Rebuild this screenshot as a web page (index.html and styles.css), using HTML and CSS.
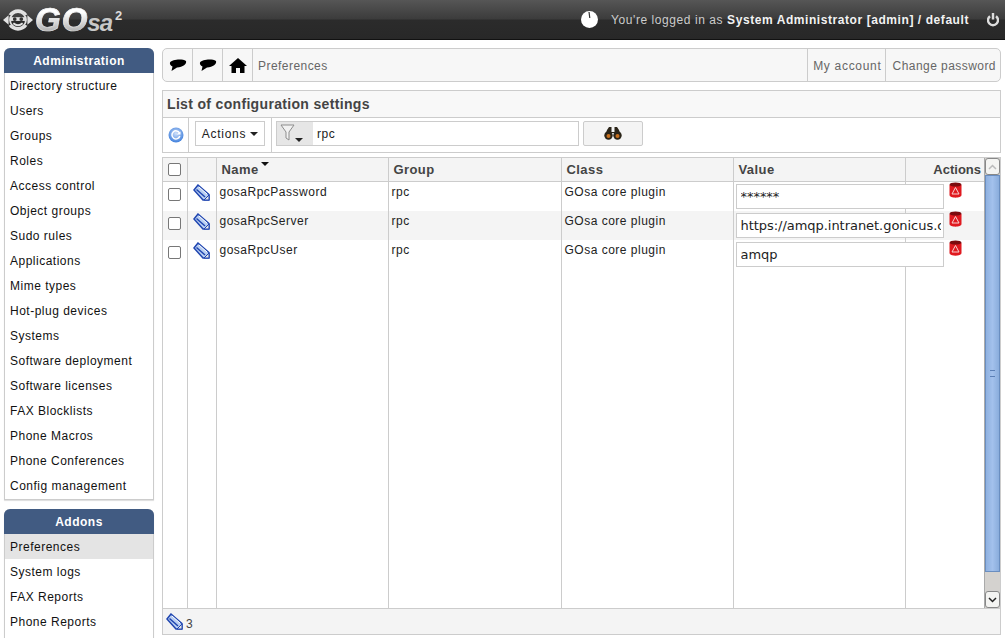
FILE: index.html
```html
<!doctype html>
<html lang="en">
<head>
	<meta charset="UTF-8">
	<title>GOsa2 - Preferences</title>
	<link rel="stylesheet" href="styles.css">
</head>
<body>
	<div class="header">
		<div class="logo">
			<svg class="logo-mark" width="30" height="30" viewBox="0 0 32 32">
				<path d="M6 10a12 12 0 0 1 20 0l-2.500 1a9.500 9.500 0 0 0-15 0z" fill="#e2e2e2"/>
				<path d="M6 22a12 12 0 0 0 20 0l-2.500-1a9.500 9.500 0 0 1-15 0z" fill="#e2e2e2"/>
				<circle cx="16" cy="16" r="8.500" fill="none" stroke="#e2e2e2" stroke-width="2"/>
				<path d="M7.500 13h17v4h-17z" fill="#e2e2e2"/>
				<circle cx="12.500" cy="15" r="2" fill="#333"/>
				<circle cx="19.500" cy="15" r="2" fill="#333"/>
				<path d="M11 19.500c3 2.500 7 2.500 10 0" fill="none" stroke="#e2e2e2" stroke-width="2"/>
				<path d="M0 16l6-5v10zM32 16l-6-5v10z" fill="#e2e2e2"/>
			</svg>
			<span class="logo-go">GO</span><span class="logo-sa">sa</span><sup class="logo-two">2</sup>
		</div>
		<div class="header-right">
			<svg class="clock" width="17" height="17" viewBox="0 0 17 17">
				<circle cx="8.500" cy="8.500" r="8.500" fill="#fff"/>
				<path d="M8 1l.8 6" stroke="#333" stroke-width="1.200"/>
			</svg>
			<span class="login">You're logged in as <b>System Administrator [admin] / default</b></span>
			<svg class="power" width="12" height="14" viewBox="0 0 12 14">
				<path d="M3 3.200a5 5 0 1 0 6 0" fill="none" stroke="#ddd" stroke-width="2.400"/>
				<path d="M6 0v6.500" stroke="#ddd" stroke-width="2.400"/>
			</svg>
		</div>
	</div>

	<div class="wrap">
		<div class="side">
			<div class="menu">
				<h2>Administration</h2>
				<ul>
					<li>Directory structure</li>
					<li>Users</li>
					<li>Groups</li>
					<li>Roles</li>
					<li>Access control</li>
					<li>Object groups</li>
					<li>Sudo rules</li>
					<li>Applications</li>
					<li>Mime types</li>
					<li>Hot-plug devices</li>
					<li>Systems</li>
					<li>Software deployment</li>
					<li>Software licenses</li>
					<li>FAX Blocklists</li>
					<li>Phone Macros</li>
					<li>Phone Conferences</li>
					<li>Config management</li>
				</ul>
			</div>
			<div class="menu">
				<h2>Addons</h2>
				<ul>
					<li class="on">Preferences</li>
					<li>System logs</li>
					<li>FAX Reports</li>
					<li>Phone Reports</li>
					<li>&nbsp;</li>
				</ul>
			</div>
		</div>

		<div class="main">
			<div class="crumbs">
				<div class="crumb-icon">
					<svg width="18" height="14" viewBox="0 0 18 14"><path d="M1 4.500C3 1.500 13 .500 17 3c1 3-3 6-9 6.500L2.500 13l1-4.500C1.500 7.500.5 6 1 4.500z" fill="#000"/></svg>
				</div>
				<div class="crumb-icon">
					<svg width="18" height="14" viewBox="0 0 18 14"><path d="M1 4.500C3 1.500 13 .500 17 3c1 3-3 6-9 6.500L2.500 13l1-4.500C1.500 7.500.5 6 1 4.500z" fill="#000"/></svg>
				</div>
				<div class="crumb-icon">
					<svg width="18" height="15" viewBox="0 0 18 15"><path d="M9 0l9 8h-2.500v7H11v-5H7v5H2.500V8H0z" fill="#000"/></svg>
				</div>
				<div class="crumb-text">Preferences</div>
				<div class="crumb-link account">My account</div>
				<div class="crumb-link password">Change password</div>
			</div>

			<div class="panel">
				<div class="panel-title">List of configuration settings</div>
				<div class="filter">
					<div class="filter-reload">
						<svg width="16" height="16" viewBox="0 0 16 16">
							<defs>
								<radialGradient id="reload-ball" cx="50%" cy="40%" r="60%">
									<stop offset="0" stop-color="#cfe0fa"/>
									<stop offset="1" stop-color="#3f7fdc"/>
								</radialGradient>
							</defs>
							<circle cx="8" cy="8" r="7.500" fill="url(#reload-ball)"/>
							<path d="M11.500 6a4 4 0 1 0 .300 3" fill="none" stroke="#fff" stroke-width="1.500"/>
							<path d="M8.500 7.500h4v-3z" fill="#fff"/>
						</svg>
					</div>
					<div class="filter-actions">
						<button class="btn-actions">Actions <i class="caret"></i></button>
					</div>
					<div class="filter-search">
						<div class="search-box">
							<div class="funnel">
								<svg width="15" height="18" viewBox="0 0 15 18">
									<path d="M1 1h13L9 8v8l-3-2V8z" fill="#f2f2f2" stroke="#8d8d8d"/>
								</svg>
								<i class="caret"></i>
							</div>
							<input class="search-input" type="text" value="rpc">
						</div>
						<button class="btn-search">
							<svg width="18" height="13" viewBox="0 0 18 13">
								<circle cx="4.500" cy="8.500" r="4.200" fill="#2a2418"/>
								<circle cx="13.500" cy="8.500" r="4.200" fill="#2a2418"/>
								<path d="M3 3l2-3h2.500v5h3V0H13l2 3 1 3H2z" fill="#2a2418"/>
								<circle cx="4.500" cy="9" r="2" fill="#c8701e"/>
								<circle cx="13.500" cy="9" r="2" fill="#c8701e"/>
							</svg>
						</button>
					</div>
				</div>
			</div>

			<div class="list">
				<div class="list-body">
					<table class="grid">
						<colgroup>
							<col class="c-check"><col class="c-icon"><col class="c-name"><col class="c-group"><col class="c-class"><col class="c-value"><col>
						</colgroup>
						<thead>
							<tr>
								<th class="center"><input class="check" type="checkbox"></th>
								<th></th>
								<th class="sorted">Name <i class="sort-mark"></i></th>
								<th>Group</th>
								<th>Class</th>
								<th>Value</th>
								<th class="right">Actions</th>
							</tr>
						</thead>
						<tbody>
							<tr class="first">
								<td class="center"><input class="check" type="checkbox"></td>
								<td class="center"><svg class="tag" width="17" height="17" viewBox="0 0 17 17"><use href="#tag-icon"/></svg></td>
								<td>gosaRpcPassword</td>
								<td>rpc</td>
								<td>GOsa core plugin</td>
								<td class="val"><input class="value" type="text" value="******"></td>
								<td class="act"><svg width="13" height="16" viewBox="0 0 13 16"><use href="#bin-icon"/></svg></td>
							</tr>
							<tr class="alt">
								<td class="center"><input class="check" type="checkbox"></td>
								<td class="center"><svg class="tag" width="17" height="17" viewBox="0 0 17 17"><use href="#tag-icon"/></svg></td>
								<td>gosaRpcServer</td>
								<td>rpc</td>
								<td>GOsa core plugin</td>
								<td class="val"><input class="value" type="text" value="https://amqp.intranet.gonicus.com/rpc"></td>
								<td class="act"><svg width="13" height="16" viewBox="0 0 13 16"><use href="#bin-icon"/></svg></td>
							</tr>
							<tr>
								<td class="center"><input class="check" type="checkbox"></td>
								<td class="center"><svg class="tag" width="17" height="17" viewBox="0 0 17 17"><use href="#tag-icon"/></svg></td>
								<td>gosaRpcUser</td>
								<td>rpc</td>
								<td>GOsa core plugin</td>
								<td class="val"><input class="value" type="text" value="amqp"></td>
								<td class="act"><svg width="13" height="16" viewBox="0 0 13 16"><use href="#bin-icon"/></svg></td>
							</tr>
							<tr class="filler">
								<td></td><td></td><td></td><td></td><td></td><td></td><td></td>
							</tr>
						</tbody>
					</table>
					<div class="scroll">
						<div class="scroll-btn"><svg width="9" height="6" viewBox="0 0 9 6"><path d="M1 5l3.500-3.500L8 5" fill="none" stroke="#bbb" stroke-width="1.500"/></svg></div>
						<div class="scroll-thumb"><span class="grip"></span></div>
						<div class="scroll-btn"><svg width="9" height="6" viewBox="0 0 9 6"><path d="M1 1l3.500 3.500L8 1" fill="none" stroke="#222" stroke-width="1.500"/></svg></div>
					</div>
				</div>
				<div class="list-foot">
					<svg class="tag" width="17" height="17" viewBox="0 0 17 17"><use href="#tag-icon"/></svg>
					<span class="count">3</span>
				</div>
			</div>
		</div>
	</div>

	<svg class="defs" width="0" height="0">
		<symbol id="tag-icon" viewBox="0 0 17 17">
			<path d="M5 1L16 10.500v5.500h-6L1 6z" fill="#b9cff2" stroke="#1f45b0" stroke-width="1.500"/>
			<path d="M3.500 5.500l8.500 7.500" stroke="#1f45b0" stroke-width="1.500"/>
			<path d="M6 3l8 7" stroke="#fff"/>
			<path d="M11 16l5-5v5z" fill="#e6e6e6" stroke="#1f45b0"/>
		</symbol>
		<symbol id="bin-icon" viewBox="0 0 13 16">
			<path d="M.5 3v10c0 3.500 12 3.500 12 0V3z" fill="#e0191f"/>
			<ellipse cx="6.500" cy="2.500" rx="6" ry="2" fill="#7c0b0e"/>
			<path d="M6.500 5.500l3.500 6.500H3z" fill="none" stroke="#f8d0d0"/>
		</symbol>
	</svg>
</body>
</html>
```

FILE: styles.css
```css
*{margin:0;padding:0;box-sizing:border-box;}
html,body{height:638px;overflow:hidden;}
body{
	background:#fff;
	font-family:"Liberation Sans",Arial,sans-serif;
	font-size:12px;
	letter-spacing:.5px;
	color:#222;
}
.defs{position:absolute;}

/* header */
.header{
	height:40px;
	background:linear-gradient(#565656,#3c3c3c 48%,#2b2b2b 52%,#282828);
	border-bottom:1px solid #111;
	display:flex;
	justify-content:space-between;
	align-items:center;
	padding:0 6px 0 3px;
}
.logo{display:flex;align-items:center;color:#ddd;}
.logo-mark{margin-right:2px;}
.logo-go{
	font-size:33px;
	font-weight:bold;
	font-style:italic;
	letter-spacing:1px;
	background:linear-gradient(#fff 30%,#a8a8a8 85%);
	-webkit-background-clip:text;
	background-clip:text;
	color:transparent;
	-webkit-text-stroke:.7px rgba(255,255,255,.55);
}
.logo-sa{font-size:24px;font-weight:bold;font-style:italic;margin:7px 0 0 -1px;letter-spacing:-1px;color:#c8c8c8;}
.logo-two{font-size:13px;font-weight:bold;margin:-9px 0 0 3px;letter-spacing:0;color:#ddd;}
.header-right{display:flex;align-items:center;color:#ccc;}
.clock{margin-right:13px;}
.login{letter-spacing:.57px;}
.login b{color:#f2f2f2;}
.power{margin-left:18px;}

/* layout */
.wrap{display:flex;padding:8px 5px 0 4px;gap:8px;}
.side{width:150px;flex:none;display:flex;flex-direction:column;gap:9px;}
.main{flex:1;display:flex;flex-direction:column;}

/* menu */
.menu{border:1px solid #ccc;border-top:0;border-radius:6px 6px 0 0;box-shadow:0 1px 1px #ddd;}
.menu h2{
	background:#415b82;
	color:#fff;
	font-size:12px;
	height:25px;
	line-height:26px;
	text-align:center;
	margin:0 -1px;
	border-radius:6px 6px 0 0;
}
.menu ul{list-style:none;padding-bottom:1px;}
.menu li{height:25px;line-height:26px;padding-left:5px;color:#111;}
.menu li.on{background:#e4e4e4;}

/* crumbs */
.crumbs{
	height:34px;
	display:flex;
	background:#f7f7f7;
	border:1px solid #ccc;
	border-radius:5px;
	color:#666;
	line-height:34px;
	letter-spacing:.45px;
}
.crumb-icon{width:30px;display:flex;align-items:center;justify-content:center;border-right:1px solid #ccc;}
.crumb-text{flex:1;padding-left:5px;}
.crumb-link{border-left:1px solid #ccc;}
.account{padding:0 3px 0 5px;letter-spacing:.7px;}
.password{padding:0 4px 0 7px;}

/* panel */
.panel{margin-top:8px;border:1px solid #ccc;height:63px;}
.panel-title{
	height:27px;
	line-height:27px;
	padding-left:4px;
	font-size:14px;
	font-weight:bold;
	letter-spacing:.33px;
	color:#444;
	background:#f8f8f8;
	border-bottom:1px solid #ccc;
}
.filter{display:flex;height:34px;}
.filter-reload{width:26px;display:flex;align-items:center;justify-content:center;border-right:1px solid #ccc;}
.filter-actions{width:83px;padding:3px 0 0 6px;border-right:1px solid #ccc;}
.btn-actions{
	width:70px;
	height:25px;
	background:#fff;
	border:1px solid #ccc;
	font:12px "Liberation Sans",Arial,sans-serif;
	letter-spacing:.75px;
	color:#222;
}
.caret{
	display:inline-block;
	border:4px solid transparent;
	border-top-color:#222;
	border-bottom:0;
	vertical-align:middle;
}
.filter-search{display:flex;padding:3px 0 0 4px;}
.search-box{display:flex;width:303px;height:25px;border:1px solid #ccc;}
.funnel{width:36px;background:#e6e6e6;display:flex;align-items:flex-start;padding:2px 0 0 3px;}
.funnel .caret{margin-top:14px;}
.search-input{
	flex:1;
	min-width:0;
	border:0;
	padding-left:4px;
	font:12px "Liberation Sans",Arial,sans-serif;
	letter-spacing:.5px;
	color:#222;
}
.btn-search{
	width:60px;
	height:25px;
	margin-left:4px;
	background:#f4f4f4;
	border:1px solid #ccc;
	border-radius:2px;
	display:flex;
	align-items:center;
	justify-content:center;
}

/* list */
.list{
	margin-top:4px;
	height:478px;
	border:1px solid #ccc;
	display:flex;
	flex-direction:column;
}
.list-body{height:450px;display:flex;}
.grid{
	flex:none;
	width:821px;
	height:450px;
	border-collapse:collapse;
	table-layout:fixed;
}
.c-check{width:24px;}
.c-icon{width:29px;}
.c-name{width:172px;}
.c-group{width:173px;}
.c-class{width:172px;}
.c-value{width:172px;}
.grid th,.grid td{border-right:1px solid #ccc;white-space:nowrap;}
.grid tr>*:last-child{border-right:0;}
.grid th{
	height:23px;
	background:#f4f4f4;
	border-bottom:1px solid #ccc;
	font-size:13px;
	letter-spacing:.42px;
	color:#444;
	text-align:left;
	padding-left:5px;
}
.grid td{height:29px;padding:3px 3px 0;vertical-align:top;line-height:14px;}
.grid .first td{height:30px;}
.grid .center{text-align:center;padding:2px 0 0;}
.grid .val{padding:2px 2px 0;}
.grid th.right{text-align:right;padding:0 3px 0 0;letter-spacing:0;}
.grid .filler td{height:auto;}
.grid .alt td{background:#f4f4f4;}
.sorted{position:relative;}
.sort-mark{
	position:absolute;
	top:4px;
	left:44px;
	border:4px solid transparent;
	border-top-color:#111;
	border-bottom:0;
}
.check{width:13px;height:13px;margin:4px 0 0;vertical-align:top;appearance:none;border:1px solid #777;border-radius:2px;background:#fff;}
thead .check{margin:0;}
.tag{display:inline-block;vertical-align:top;}
.value{
	width:208px;
	height:25px;
	border:1px solid #ccc;
	padding:0 2px 0 4px;
	font:13px "DejaVu Sans",sans-serif;
	color:#222;
	letter-spacing:-.04px;
	background:#fff;
	position:relative;
}
.grid .act{padding:0;}
.act svg{display:block;margin-left:43px;}

/* scrollbar */
.scroll{width:16px;flex:none;display:flex;flex-direction:column;background:#d4d2cf;border-left:1px solid #aaa;}
.scroll-btn{
	height:17px;
	background:#f4f4f2;
	border:1px solid #888;
	border-radius:3px;
	display:flex;
	align-items:center;
	justify-content:center;
}
.scroll-thumb{
	height:397px;
	background:linear-gradient(90deg,#8fb1e0,#a3c1ec 50%,#8aaddc);
	border:1px solid #6a8ec0;
	display:flex;
	align-items:center;
	justify-content:center;
	margin-bottom:auto;
}
.grip{width:5px;height:7px;border-top:1px solid #5b7fb5;border-bottom:1px solid #5b7fb5;}

.list-foot{
	flex:1;
	background:#f4f4f4;
	border-top:1px solid #ccc;
	display:flex;
	align-items:center;
	padding-left:3px;
	gap:3px;
}
.count{margin-top:4px;color:#444;}
```
